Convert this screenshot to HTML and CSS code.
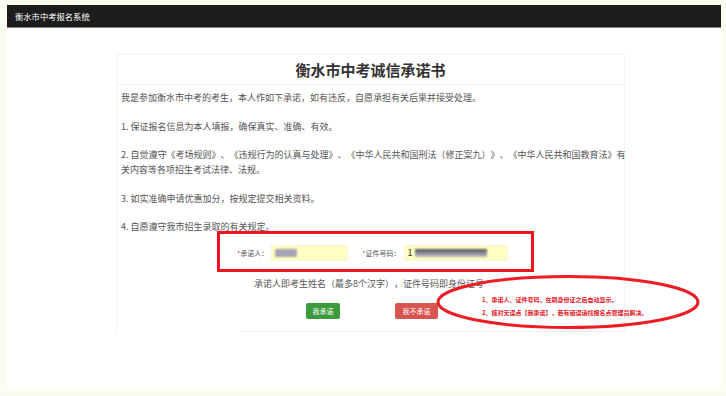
FILE: index.html
```html
<!DOCTYPE html>
<html lang="zh-CN">
<head>
<meta charset="utf-8">
<title>衡水市中考诚信承诺书</title>
<link rel="stylesheet" href="styles.css">
</head>
<body>
<div class="page">
  <header class="navbar"><span class="brand">衡水市中考报名系统</span></header>
  <main class="main">
    <section class="card">
      <div class="card-header"><h1 class="title">衡水市中考诚信承诺书</h1></div>
      <div class="card-body">
        <p>我是参加衡水市中考的考生，本人作如下承诺，如有违反，自愿承担有关后果并接受处理。</p>
        <p>1. 保证报名信息为本人填报，确保真实、准确、有效。</p>
        <p>2. 自觉遵守《考场规则》、《违规行为的认真与处理》、《中华人民共和国刑法（修正案九）》、《中华人民共和国教育法》有关内容等各项招生考试法律、法规。</p>
        <p>3. 如实准确申请优惠加分，按规定提交相关资料。</p>
        <p class="item-last">4. 自愿遵守我市招生录取的有关规定。</p>
        <div class="form-box">
          <div class="field"><span class="req">*</span>承诺人：<span class="input input-name"><span class="blur blur-name"></span></span></div>
          <div class="field field-id"><span class="req">*</span>证件号码：<span class="input input-id"><span class="digit">1</span><span class="blur blur-id"></span></span></div>
        </div>
        <p class="hint">承诺人即考生姓名（最多8个汉字），证件号码即身份证号</p>
        <div class="actions">
          <button class="btn btn-ok">我承诺</button>
          <button class="btn btn-no">我不承诺</button>
        </div>
        <div class="footer-line"></div>
      </div>
    </section>
  </main>
  <div class="note">
    <svg class="note-ring" width="266" height="58" viewBox="0 0 266 58"><ellipse cx="133" cy="29" rx="130" ry="25.5" fill="none" stroke="#ee1c24" stroke-width="3"/></svg>
    <div class="note-text">
      <div>1、承诺人、证件号码，在刷身份证之后自动显示。</div>
      <div>2、核对无误点【我承诺】，若有错误请找报名点管理员解决。</div>
    </div>
  </div>
</div>
</body>
</html>
```
FILE: styles.css
```css
html, body {
  margin: 0;
  padding: 0;
}
body {
  background: #fafcef;
  font-family: "Noto Sans CJK SC", "Noto Sans", sans-serif;
  text-spacing-trim: space-all;
}
.page {
  position: relative;
  margin: 5px 0 0 7px;
  width: 714px;
  height: 383px;
  background: #fff;
}
.navbar {
  height: 22px;
  background: #1c1c1c;
  border-bottom: 1px solid #8a8a8a;
  display: flex;
  align-items: center;
  padding-left: 8px;
}
.brand {
  color: #fff;
  font-size: 8.3px;
}
.main {
  padding-top: 26px;
}
.card {
  width: 509px;
  margin-left: 109px;
  border: 1px solid #f3f3f3;
  border-bottom: none;
  box-sizing: border-box;
}
.card-header {
  height: 29px;
  border-bottom: 1px solid #f0f0f0;
  display: flex;
  align-items: center;
  justify-content: center;
}
.title {
  margin: 0;
  font-size: 15px;
  font-weight: 700;
  color: #333;
}
.card-body {
  padding: 5px 0 0 4px;
  font-size: 9px;
  color: #555;
}
.card-body p {
  margin: 0 -8px 13.5px 0;
  line-height: 15px;
}
.card-body p.item-last {
  margin-bottom: -3px;
}
.form-box {
  margin-left: 96px;
  width: 317px;
  height: 41px;
  box-sizing: border-box;
  border: 3px solid #f0141e;
  display: flex;
  align-items: center;
  padding: 2px 0 0 17px;
  font-size: 7px;
  color: #555;
}
.field {
  display: flex;
  align-items: center;
}
.field-id {
  margin-left: 14px;
}
.req {
  color: #e33;
}
.input {
  display: flex;
  align-items: center;
  margin-left: 3px;
  height: 16px;
  background: #ffffc4;
  box-sizing: border-box;
  border: 1px solid #f6f6d6;
  padding-left: 3px;
}
.input-name {
  width: 77px;
}
.input-id {
  width: 104px;
}
.digit {
  font-size: 9px;
  color: #333;
}
.blur {
  display: block;
  filter: blur(1.3px);
}
.blur-name {
  width: 22px;
  height: 8px;
  background: #a4a4b2;
}
.blur-id {
  margin-left: 2px;
  width: 72px;
  height: 8px;
  background: linear-gradient(#4a4a52, #9a9aa6 60%, #b8b8c2);
}
.card-body p.hint {
  margin: 3.5px 0 0 133px;
  font-size: 9px;
  color: #555;
}
.actions {
  display: flex;
  margin: 12.5px 0 0 185px;
}
.btn {
  height: 16px;
  border: none;
  border-radius: 2px;
  color: #fff;
  font-family: inherit;
  font-size: 7px;
  padding: 0;
}
.btn-ok {
  width: 34px;
  background: #3d9b3d;
}
.btn-no {
  width: 43px;
  margin-left: 55px;
  background: #d9534f;
}
.footer-line {
  margin: 12px 0 0 120px;
  border-top: 1px solid #efefef;
}
.note-ring {
  position: absolute;
  left: 428px;
  top: 268px;
}
.note-text {
  position: absolute;
  left: 475px;
  top: 287.5px;
  font-size: 6px;
  line-height: 13px;
  font-weight: 700;
  color: #e8141c;
  white-space: nowrap;
}
```
